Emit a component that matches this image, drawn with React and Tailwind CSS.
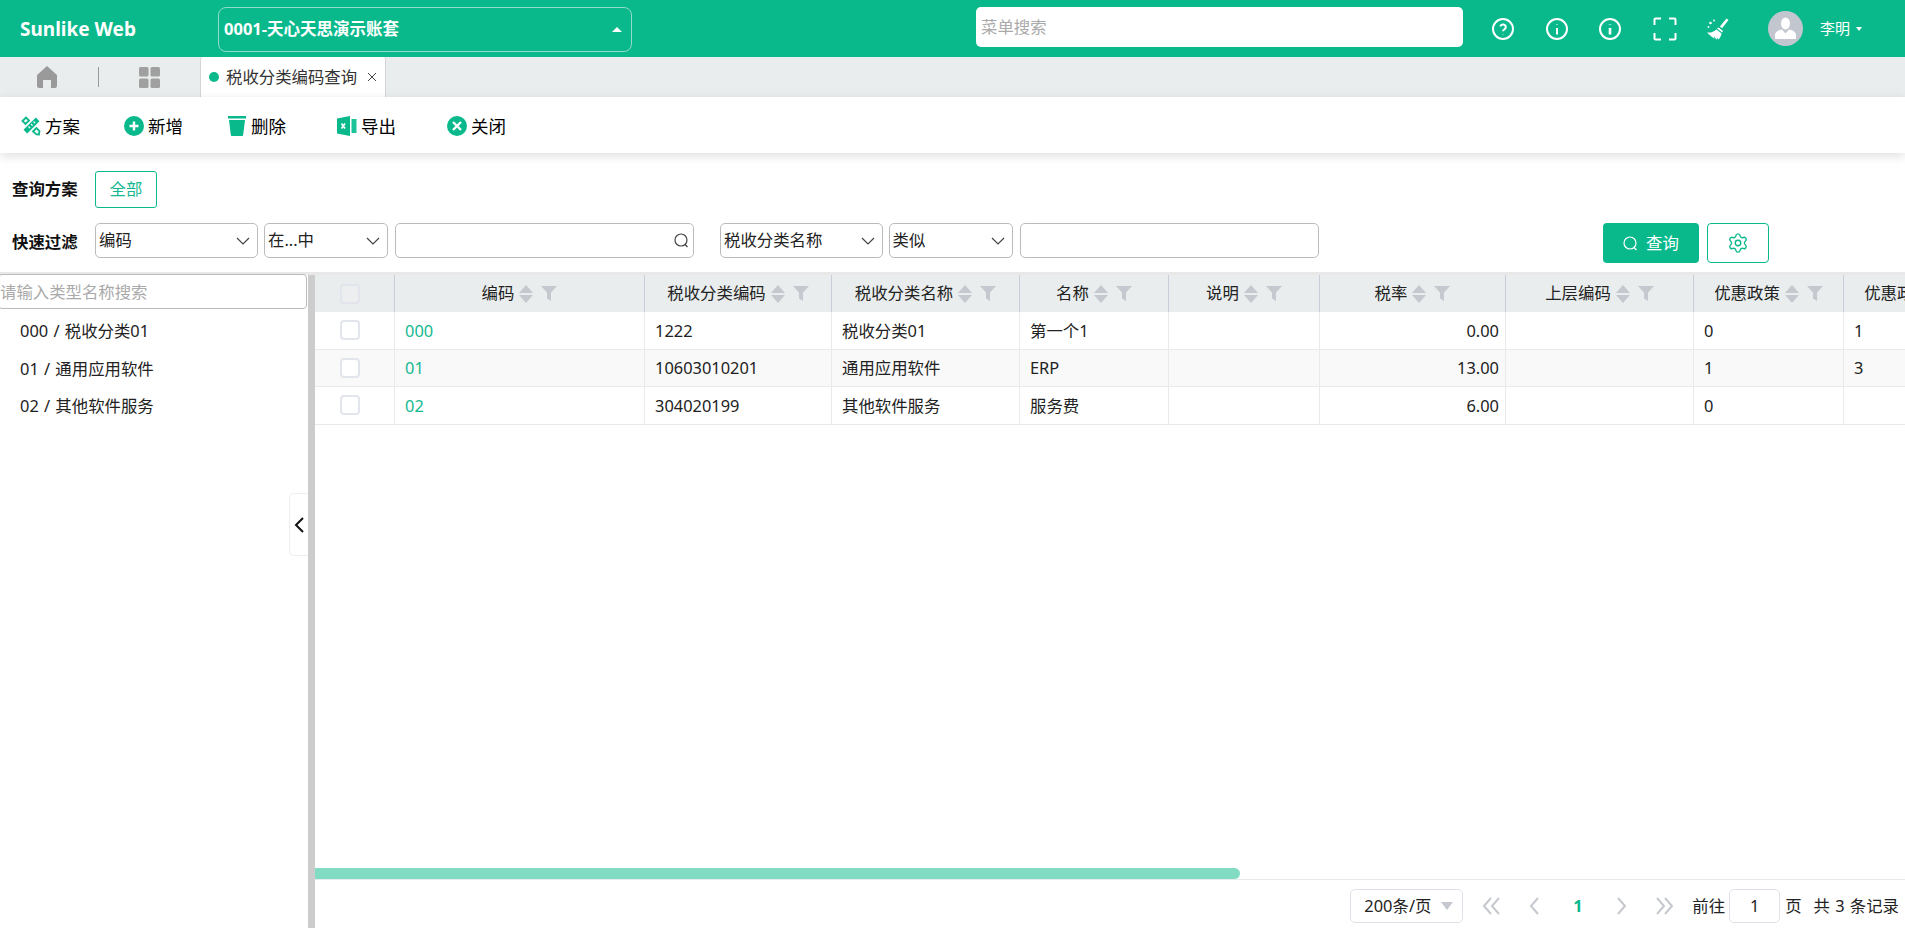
import { Settings } from "lucide-react";

const font = "font-['Noto_Sans','Noto_Sans_CJK_SC',sans-serif]";

const columns = [
  { title: "编码", w: "w-[250px]" },
  { title: "税收分类编码", w: "w-[187px]" },
  { title: "税收分类名称", w: "w-[188px]" },
  { title: "名称", w: "w-[149px]" },
  { title: "说明", w: "w-[151px]" },
  { title: "税率", w: "w-[186px]", right: true },
  { title: "上层编码", w: "w-[188px]" },
  { title: "优惠政策", w: "w-[150px]" },
  { title: "优惠政策", w: "w-[150px]" },
];

const rows = [
  ["000", "1222", "税收分类01", "第一个1", "", "0.00", "", "0", "1"],
  ["01", "10603010201", "通用应用软件", "ERP", "", "13.00", "", "1", "3"],
  ["02", "304020199", "其他软件服务", "服务费", "", "6.00", "", "0", ""],
];

function Chevron() {
  return (
    <svg width="14" height="8" viewBox="0 0 14 8" fill="none" stroke="#444" strokeWidth="1.2">
      <path d="M1 1l6 6 6-6" />
    </svg>
  );
}

function SearchGlyph({ color = "#444" }) {
  return (
    <svg width="15" height="15" viewBox="0 0 15 15" fill="none" stroke={color} strokeWidth="1.2">
      <circle cx="7" cy="7" r="6" />
      <path d="M11 11.5l2.5 2.5" />
    </svg>
  );
}

function SelectBox({ value, w }) {
  return (
    <div className={`${w} h-[35px] flex items-center justify-between pl-[3px] pr-[7px] border-[1.5px] border-[#bbb] rounded-[5px] text-[16.4px] text-[#222]`}>
      <span>{value}</span>
      <Chevron />
    </div>
  );
}

function SortFilter() {
  return (
    <div className="flex items-center ml-[5px] gap-[8px] shrink-0">
      <svg width="14" height="18" viewBox="0 0 14 18" fill="#c5c8ce">
        <path d="M7 0l7 8H0zM0 10h14l-7 8z" />
      </svg>
      <svg width="16" height="15" viewBox="0 0 16 15" fill="#c5c8ce">
        <path d="M0 0h16L10 6.5V15L6 12.5V6.5z" />
      </svg>
    </div>
  );
}

function HeaderIcons() {
  const stroke = { fill: "none", stroke: "white", strokeWidth: 2 };
  return (
    <div className="flex items-center w-[267px] shrink-0 [&>svg]:shrink-0">
      <svg className="ml-[28px]" width="24" height="24" viewBox="0 0 24 24" {...stroke}>
        <circle cx="12" cy="12" r="10" />
        <path d="M9.2 9.3a2.9 2.9 0 0 1 5.6 1c0 1.9-2.8 2.4-2.8 3.9M12 17.2v.3" />
      </svg>
      <svg className="ml-[30px]" width="24" height="24" viewBox="0 0 24 24" {...stroke}>
        <circle cx="12" cy="12" r="10" />
        <path d="M12 11v6.5M12 7v.6" />
      </svg>
      <svg className="ml-[29px]" width="24" height="24" viewBox="0 0 24 24" {...stroke}>
        <circle cx="12" cy="12" r="10" />
        <path d="M12 11v6.5M12 7v.6" strokeWidth="2.6" />
      </svg>
      <svg className="ml-[31px]" width="24" height="24" viewBox="0 0 24 24" {...stroke}>
        <path d="M1.5 8V2.5a1 1 0 0 1 1-1H8M16 1.5h5.5a1 1 0 0 1 1 1V8M22.5 16v5.5a1 1 0 0 1-1 1H16M8 22.5H2.5a1 1 0 0 1-1-1V16" />
      </svg>
      <svg className="ml-[29px]" width="24" height="24" viewBox="0 0 24 24" fill="white">
        <path d="M20.5 1.5l2 1.6-6.4 8.2-2.2-1.7zM12.6 10.600l4.4 3.4-.9 1.6-5.1-4zM10.400 12.400l5.200 4.100c-.5 2.600-1.700 4.700-3.300 6l-1.600-2.300.3 2.300-1.200-.6-1.600-2.800.3 2.300C6.400 20.600 3.200 18 1 15.500c3.900 .4 7.100-.8 9.400-3.100z" />
        <circle cx="4.500" cy="6" r="1.300" />
        <circle cx="8" cy="3.500" r=".9" />
        <circle cx="2.500" cy="10" r=".9" />
      </svg>
    </div>
  );
}

function ToolIcon({ kind }) {
  if (kind === "plan") {
    return (
      <svg width="20" height="20" viewBox="0 0 20 20" fill="none" stroke="#09b98c">
        <path d="M1.500 5L5 1.500 8 4.500 4.500 8zM12 15.500l3.500-3.500 3 3-.5 3.500-2.500-.1z" strokeWidth="1.800" />
        <path d="M14.800 1.500L18.500 5.200 6.200 17.500 2.500 13.800z" fill="#09b98c" stroke="none" />
        <path d="M7.500 10.500l1.600 1.600M10 8l1.600 1.600M12.500 5.500l1.600 1.600" stroke="white" strokeWidth="1.200" />
      </svg>
    );
  }
  if (kind === "add") {
    return (
      <svg width="20" height="20" viewBox="0 0 20 20">
        <circle cx="10" cy="10" r="10" fill="#09b98c" />
        <path d="M10 5.500v9M5.500 10h9" stroke="white" strokeWidth="2.400" />
      </svg>
    );
  }
  if (kind === "del") {
    return (
      <svg width="18" height="20" viewBox="0 0 18 20" fill="#09b98c">
        <rect x="0" y="0" width="18" height="2.500" />
        <path d="M1 4h16l-1.800 15a1 1 0 0 1-1 1H3.800a1 1 0 0 1-1-1z" />
      </svg>
    );
  }
  if (kind === "xls") {
    return (
      <svg width="20" height="20" viewBox="0 0 20 20">
        <path d="M0 2.500L13 0v20L0 17.500z" fill="#09b98c" />
        <path d="M14.500 3H19.500v14H14.500z" fill="#1cc49a" />
        <path d="M4.500 7.500l3.500 5M8 7.500l-3.500 5" stroke="white" strokeWidth="1.600" />
      </svg>
    );
  }
  return (
    <svg width="20" height="20" viewBox="0 0 20 20">
      <circle cx="10" cy="10" r="10" fill="#09b98c" />
      <path d="M6 6l8 8M14 6l-8 8" stroke="white" strokeWidth="2.400" />
    </svg>
  );
}

function ToolButton({ kind, label, w, gap = "gap-[4px]" }) {
  return (
    <div className={`${w} flex items-center ${gap} text-[17.5px] text-black`}>
      <ToolIcon kind={kind} />
      <span>{label}</span>
    </div>
  );
}

function Check({ header }) {
  return (
    <div className={`w-[20px] h-[20px] rounded-[4px] border-2 border-[#e2e5ec] ${header ? "bg-[#eceef0]" : "bg-white"}`} />
  );
}

function Pager({ d, w = "w-[43px]" }) {
  return (
    <div className={`${w} flex justify-center`}>
      <svg width="20" height="18" viewBox="0 0 20 18" fill="none" stroke="#c5c8ce" strokeWidth="2">
        <path d={d} />
      </svg>
    </div>
  );
}

export default function App() {
  return (
    <div className={`${font} w-[1905px] h-[928px] flex flex-col overflow-hidden bg-white`}>
      {/* top bar */}
      <div className="h-[57px] shrink-0 flex items-center bg-[#09b98c] text-white">
        <div className="w-[218px] pl-[20px] pt-[1px] text-[19px] font-bold">Sunlike Web</div>
        <div className="w-[414px] h-[45px] mb-[-1px] flex items-center justify-between pl-[5px] pr-[9px] border border-[#8fdcc8] rounded-[8px]">
          <span className="text-[16.5px] font-bold">0001-天心天思演示账套</span>
          <span className="w-0 h-0 border-x-[5px] border-x-transparent border-b-[5px] border-b-white" />
        </div>
        <div className="w-[487px] h-[40px] ml-[344px] mb-[3px] flex items-center px-[5px] bg-white rounded-[5px]">
          <input className="w-full outline-none text-[16.4px] placeholder:text-[#aaa]" placeholder="菜单搜索" />
        </div>
        <HeaderIcons />
        <div className="w-[35px] h-[35px] ml-[38px] shrink-0 rounded-full bg-[#c2c6ce] flex items-center justify-center">
          <svg width="21" height="24" viewBox="0 0 21 24" fill="white">
            <ellipse cx="10.500" cy="6.500" rx="4.500" ry="6" />
            <path d="M7 12.500l3.500 4 3.500-4c4 .8 7 2.500 7 5.500v4H0v-4c0-3 3-4.700 7-5.500z" />
          </svg>
        </div>
        <span className="ml-[17px] text-[15px]">李明</span>
        <span className="ml-[6px] w-0 h-0 border-x-[3px] border-x-transparent border-t-[4px] border-t-white" />
      </div>

      {/* tab bar */}
      <div className="h-[40px] shrink-0 flex items-center bg-[#e9eded]">
        <div className="w-[93px] mr-[5px] flex justify-center">
          <svg width="20" height="22" viewBox="0 0 20 22" fill="#9a9a9a">
            <path d="M10 0L20 9v11a2 2 0 0 1-2 2h-4v-8H6v8H2a2 2 0 0 1-2-2V9z" />
          </svg>
        </div>
        <div className="w-px h-[20px] bg-[#999]" />
        <div className="w-[101px] flex justify-center">
          <svg width="21" height="21" viewBox="0 0 21 21" fill="#a0a0a0">
            <rect width="9.500" height="9.500" rx="1.500" />
            <rect x="11.500" width="9.500" height="9.500" rx="1.500" />
            <rect y="11.500" width="9.500" height="9.500" rx="1.500" />
            <rect x="11.500" y="11.500" width="9.500" height="9.500" rx="1.500" />
          </svg>
        </div>
        <div className="w-[186px] h-full flex items-center pl-[8px] bg-white border-x border-[#d5d5d5] rounded-t-[3px]">
          <span className="w-[10px] h-[10px] rounded-full bg-[#09b98c]" />
          <span className="ml-[7px] text-[16.4px] text-[#333]">税收分类编码查询</span>
          <svg className="ml-[10px]" width="10" height="10" viewBox="0 0 10 10" stroke="#444" strokeWidth="1">
            <path d="M1 1l8 8M9 1l-8 8" />
          </svg>
        </div>
      </div>

      {/* toolbar */}
      <div className="relative z-10 h-[56px] shrink-0 flex items-center pl-[21px] pt-[2px] bg-white shadow-[0_3px_10px_rgba(0,0,0,0.13)]">
        <ToolButton kind="plan" label="方案" w="w-[103px]" />
        <ToolButton kind="add" label="新增" w="w-[104px]" />
        <ToolButton kind="del" label="删除" w="w-[109px]" gap="gap-[5px]" />
        <ToolButton kind="xls" label="导出" w="w-[110px]" />
        <ToolButton kind="close" label="关闭" w="w-[60px]" />
      </div>

      {/* query area */}
      <div className="h-[119px] shrink-0 pt-[18px] pl-[12px]">
        <div className="flex items-center h-[37px]">
          <span className="w-[83px] text-[16.4px] font-bold text-[#111]">查询方案</span>
          <div className="w-[62px] h-[37px] flex items-center justify-center border border-[#09b98c] rounded-[3px] text-[16.4px] text-[#14b890]">全部</div>
        </div>
        <div className="flex items-start mt-[15px]">
          <span className="w-[83px] h-[35px] leading-[37px] text-[16.4px] font-bold text-[#111]">快速过滤</span>
          <SelectBox value="编码" w="w-[163px]" />
          <div className="w-[6px]" />
          <SelectBox value="在...中" w="w-[124px]" />
          <div className="w-[299px] h-[35px] ml-[6.500px] flex items-center justify-end pr-[4px] border-[1.5px] border-[#bbb] rounded-[5px]">
            <SearchGlyph />
          </div>
          <div className="w-[26.500px]" />
          <SelectBox value="税收分类名称" w="w-[162.500px]" />
          <div className="w-[6px]" />
          <SelectBox value="类似" w="w-[124.500px]" />
          <div className="w-[299px] h-[35px] ml-[6.500px] border-[1.5px] border-[#bbb] rounded-[5px]" />
          <div className="w-[96px] h-[40px] ml-[284.500px] flex items-center justify-center gap-[8px] bg-[#09b98c] rounded-[4px] text-[16.4px] text-white">
            <SearchGlyph color="white" />
            <span>查询</span>
          </div>
          <div className="w-[62px] h-[40px] ml-[8px] flex items-center justify-center border border-[#09b98c] rounded-[4px]">
            <Settings size={22} strokeWidth={1.5} color="#09b98c" />
          </div>
        </div>
      </div>

      {/* main */}
      <div className="flex-1 min-h-0 flex border-t-[3px] border-[#e8e8e8]">
        <div className="w-[308px] shrink-0 relative">
          <input
            className="block w-[309px] h-[35px] ml-[-2px] mt-[-1px] pl-[1px] border-[1.5px] border-[#bbb] rounded-[4px] outline-none text-[16.4px] placeholder:text-[#aaa]"
            placeholder="请输入类型名称搜索"
          />
          <div className="pl-[20px] text-[16.4px] leading-[37.500px] text-[#222] mt-[3px] [word-spacing:1px]">
            <div>000 / 税收分类01</div>
            <div>01 / 通用应用软件</div>
            <div>02 / 其他软件服务</div>
          </div>
          <div className="absolute right-0 top-[218px] w-[19px] h-[63px] flex items-center justify-center bg-white border border-r-0 border-[#eceef2] rounded-l-[5px]">
            <svg width="10" height="16" viewBox="0 0 10 16" fill="none" stroke="#111" strokeWidth="2">
              <path d="M9 1L2 8l7 7" />
            </svg>
          </div>
        </div>
        <div className="w-[7px] shrink-0 bg-[#ccc]" />

        <div className="flex-1 min-w-0 flex flex-col overflow-hidden">
          <div className="flex h-[37px] shrink-0 bg-[#e9eded] text-[16.4px] text-[#222]">
            <div className="w-[80px] shrink-0 flex items-center pl-[25px] border-r border-[#c8cdd9]">
              <Check header />
            </div>
            {columns.map((c, j) => (
              <div key={j} className={`${c.w} shrink-0 flex items-center justify-center whitespace-nowrap border-r border-[#c8cdd9]`}>
                <span>{c.title}</span>
                <SortFilter />
              </div>
            ))}
          </div>
          {rows.map((r, i) => (
            <div key={r[0]} className={`flex h-[37.500px] shrink-0 border-b-[1.5px] border-[#e8eaec] text-[16.4px] text-[#222] ${i === 1 ? "bg-[#f9f9f9]" : "bg-white"}`}>
              <div className="w-[80px] shrink-0 flex items-center pl-[25px] border-r border-[#e8eaec]">
                <Check />
              </div>
              {columns.map((c, j) => (
                <div
                  key={j}
                  className={`${c.w} shrink-0 flex items-center pt-[2px] border-r border-[#e8eaec] ${c.right ? "justify-end pr-[6px]" : "pl-[10px]"} ${j === 0 ? "text-[#14b890]" : ""}`}
                >
                  {r[j]}
                </div>
              ))}
            </div>
          ))}
          <div className="flex-1" />
          <div className="w-[925px] h-[11px] shrink-0 bg-[#82dcc4] rounded-r-[6px]" />
          <div className="h-[49px] shrink-0 flex items-center justify-end pr-[6px] pt-[4px] border-t-[1.5px] border-[#e8eaec] text-[16.4px] text-[#222]">
            <div className="w-[113px] h-[34px] flex items-center justify-between pl-[13px] pr-[9px] border-[1.5px] border-[#dfe2e9] rounded-[5px]">
              <span>200条/页</span>
              <span className="w-0 h-0 border-x-[6px] border-x-transparent border-t-[8px] border-t-[#c5c8ce]" />
            </div>
            <div className="w-[7px]" />
            <Pager d="M9 1L2 9l7 8M17 1l-7 8 7 8" />
            <Pager d="M13 1L6 9l7 8" />
            <div className="w-[43px] text-center font-bold text-[#09b98c]">1</div>
            <Pager d="M7 1l7 8-7 8" />
            <Pager d="M3 1l7 8-7 8M11 1l7 8-7 8" />
            <span className="ml-[7px]">前往</span>
            <div className="w-[51px] h-[34px] ml-[4px] flex items-center justify-center border-[1.5px] border-[#dfe2e9] rounded-[5px]">1</div>
            <span className="ml-[5px]">页</span>
            <span className="ml-[12px] [word-spacing:1px]">共 3 条记录</span>
          </div>
        </div>
      </div>
    </div>
  );
}
